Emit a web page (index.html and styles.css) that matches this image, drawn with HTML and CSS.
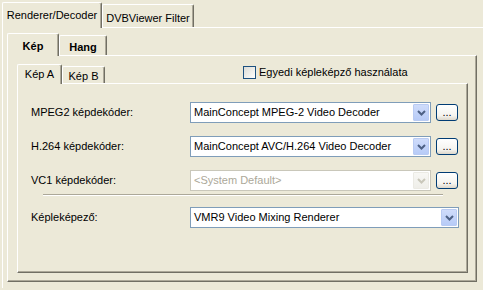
FILE: index.html
```html
<!DOCTYPE html>
<html lang="hu">
<head>
<meta charset="utf-8">
<title>Renderer/Decoder</title>
<link rel="stylesheet" href="styles.css">
</head>
<body>
<div class="root">
  <div class="strip strip-outer">
    <div class="tab sel t-rend">Renderer/Decoder</div>
    <div class="tab t-dvb">DVBViewer Filter</div>
  </div>
  <div class="panel-outer">
    <div class="strip strip-kep">
      <div class="tab sel bold t-kep">Kép</div>
      <div class="tab bold t-hang">Hang</div>
    </div>
    <div class="panel panel-kep">
      <div class="strip strip-kepa">
        <div class="tab sel t-kepa">Kép A</div>
        <div class="tab t-kepb">Kép B</div>
        <label class="chk"><span class="box"></span><span>Egyedi képleképző használata</span></label>
      </div>
      <div class="panel panel-inner">
        <div class="row">
          <div class="label">MPEG2 képdekóder:</div>
          <div class="combo">
            <span class="val">MainConcept MPEG-2 Video Decoder</span>
            <span class="arrow"><svg width="9" height="6" viewBox="0 0 9 6"><path d="M1 1 L4.5 4.5 L8 1" fill="none" stroke="#4d6185" stroke-width="2"/></svg></span>
          </div>
          <div class="btn">...</div>
        </div>
        <div class="row gap">
          <div class="label">H.264 képdekóder:</div>
          <div class="combo">
            <span class="val">MainConcept AVC/H.264 Video Decoder</span>
            <span class="arrow"><svg width="9" height="6" viewBox="0 0 9 6"><path d="M1 1 L4.5 4.5 L8 1" fill="none" stroke="#4d6185" stroke-width="2"/></svg></span>
          </div>
          <div class="btn">...</div>
        </div>
        <div class="row gap">
          <div class="label">VC1 képdekóder:</div>
          <div class="combo disabled">
            <span class="val">&lt;System Default&gt;</span>
            <span class="arrow"><svg width="9" height="6" viewBox="0 0 9 6"><path d="M1 1 L4.5 4.5 L8 1" fill="none" stroke="#c9c7ba" stroke-width="2"/></svg></span>
          </div>
          <div class="btn">...</div>
        </div>
        <div class="sep"></div>
        <div class="row after-sep">
          <div class="label">Képleképező:</div>
          <div class="combo wide">
            <span class="val">VMR9 Video Mixing Renderer</span>
            <span class="arrow"><svg width="9" height="6" viewBox="0 0 9 6"><path d="M1 1 L4.5 4.5 L8 1" fill="none" stroke="#4d6185" stroke-width="2"/></svg></span>
          </div>
        </div>
      </div>
    </div>
  </div>
</div>
</body>
</html>
```
FILE: styles.css
```css
html, body {
  margin: 0;
  padding: 0;
}
body {
  background: #ece9d8;
  font: 11px/13px "Liberation Sans", Arial, sans-serif;
  color: #000;
  width: 483px;
  height: 290px;
  overflow: hidden;
}
.root {
  padding: 2px 0 0 2px;
}
.strip {
  display: flex;
  align-items: flex-end;
}
.strip-outer { height: 25px; }
.strip-kep { height: 22px; }
.strip-kepa { height: 19px; }

.tab {
  box-sizing: border-box;
  border-top: 1px solid #fff;
  border-left: 1px solid #fff;
  border-right: 1px solid #716f64;
  border-radius: 2px 2px 0 0;
  box-shadow: inset -1px 0 0 #aca899;
  text-align: center;
  white-space: nowrap;
  background: #ece9d8;
}
.tab.sel {
  position: relative;
  z-index: 1;
  margin-bottom: -1px;
}
.bold { font-weight: bold; }

.t-rend { width: 100px; height: 26px; padding-top: 6px; }
.t-dvb { width: 92px; height: 23px; padding-top: 7px; }
.t-kep { width: 52px; height: 23px; padding-top: 6px; }
.t-hang { width: 48px; height: 20px; padding-top: 5px; }
.t-kepa { width: 45px; height: 20px; padding-top: 3px; }
.t-kepb { width: 43px; height: 17px; padding-top: 3px; }

.panel-outer {
  border-top: 1px solid #fff;
  border-left: 1px solid #fff;
  width: 481px;
  height: 261px;
  padding: 5px 0 0 4px;
  box-sizing: border-box;
}
.panel {
  box-sizing: border-box;
  border: 1px solid;
  border-color: #fff #716f64 #716f64 #fff;
  box-shadow: inset -1px -1px 0 #aca899;
}
.panel-kep {
  width: 470px;
  height: 227px;
  padding: 8px 0 0 9px;
}
.panel-inner {
  width: 451px;
  height: 190px;
  padding: 18px 0 0 13px;
}

.chk {
  align-self: flex-start;
  margin-top: 2px;
  margin-left: 138px;
  display: flex;
  align-items: center;
  white-space: nowrap;
}
.box {
  width: 13px;
  height: 13px;
  box-sizing: border-box;
  border: 1px solid #1c5180;
  background: linear-gradient(135deg, #dcdcd7 0%, #f4f4f0 70%, #fff 100%);
  margin-right: 3px;
}

.row {
  display: flex;
  align-items: center;
  height: 21px;
}
.row.gap { margin-top: 13px; }
.row.after-sep { margin-top: 11px; }
.label {
  width: 159px;
  white-space: nowrap;
}
.combo {
  box-sizing: border-box;
  width: 241px;
  height: 21px;
  border: 1px solid #7f9db9;
  background: #fff;
  display: flex;
  align-items: center;
}
.combo.wide { width: 269px; }
.combo .val {
  flex: 1;
  padding-left: 3px;
  white-space: nowrap;
  overflow: hidden;
}
.combo .arrow {
  width: 16px;
  height: 17px;
  margin-right: 1px;
  box-sizing: border-box;
  border: 1px solid #b9cbf3;
  border-radius: 1px;
  background: linear-gradient(#cfdcfb, #b7cbf7);
  display: flex;
  align-items: center;
  justify-content: center;
}
.combo.disabled {
  border-color: #c9c7ba;
  background: #fff;
  color: #aca899;
}
.combo.disabled .arrow {
  border-color: #ebeae4;
  background: linear-gradient(#f7f7f4, #efeee9);
}
.btn {
  box-sizing: border-box;
  width: 22px;
  height: 17px;
  margin-left: 5px;
  border: 1px solid #003c74;
  border-radius: 3px;
  background: linear-gradient(#ffffff, #f5f4ef 70%, #dcd7cb);
  text-align: center;
  line-height: 15px;
}
.sep {
  margin: 3px 0 0 12px;
  width: 400px;
  border-top: 1px solid #aca899;
  border-bottom: 1px solid #fff;
}
```
